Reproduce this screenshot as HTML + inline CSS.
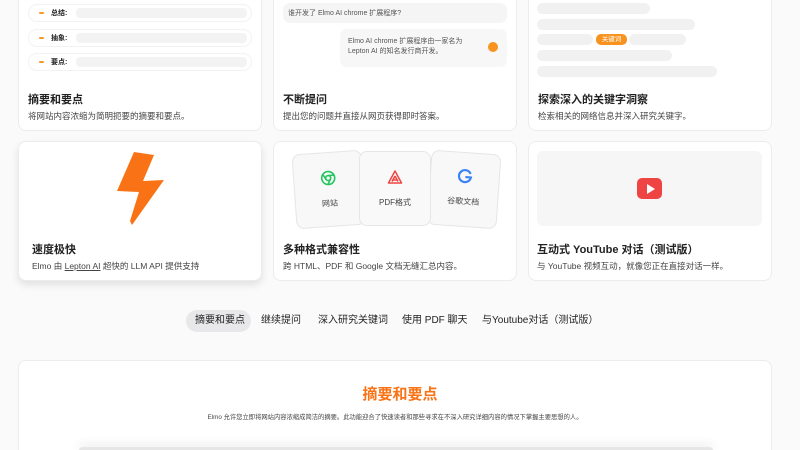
<!DOCTYPE html>
<html style="width:800px;height:450px;overflow:hidden"><head><meta charset="utf-8"><style>
*{box-sizing:border-box;margin:0;padding:0}
body{width:800px;height:450px;overflow:hidden;background:#fafafa;font-family:"Liberation Sans","Noto Sans CJK SC",sans-serif;color:#222;position:relative}
.card{position:absolute;background:#fff;border:1px solid #ececec;border-radius:8px}
.t{position:absolute;font-size:11px;font-weight:bold;color:#222}
.d{position:absolute;font-size:8.5px;color:#444}
.row{position:absolute;left:28px;width:224px;height:18px;border:1px solid #f2f2f2;border-radius:9px;background:#fff}
.row .dash{position:absolute;left:10px;top:7px;width:5px;height:2px;background:#f59a23;border-radius:1px}
.row .lb{position:absolute;left:22px;top:3px;font-size:7px;font-weight:bold}
.row .bar{position:absolute;left:47px;top:3px;right:4px;height:10px;background:#f3f3f3;border-radius:4px}
.gb{position:absolute;background:#f1f1f1;border-radius:6px;height:11px}
.tile{position:absolute;width:70px;height:75px;background:#f8f8f8;border:1px solid #e6e6e6;border-radius:8px;font-size:8px;color:#444;text-align:center}
.tab{position:absolute;top:310px;height:22px;line-height:22px;font-size:10px;color:#222}
</style></head><body>
<div class="card" style="left:18px;top:-10px;width:244px;height:141px"></div>
<div class="row" style="top:4px"><div class="dash"></div><div class="lb">总结:</div><div class="bar"></div></div>
<div class="row" style="top:29px"><div class="dash"></div><div class="lb">抽象:</div><div class="bar"></div></div>
<div class="row" style="top:53px"><div class="dash"></div><div class="lb">要点:</div><div class="bar"></div></div>
<div class="t" style="left:28px;top:91px">摘要和要点</div>
<div class="d" style="left:28px;top:110px">将网站内容浓缩为简明扼要的摘要和要点。</div>

<div class="card" style="left:273px;top:-10px;width:244px;height:141px"></div>
<div style="position:absolute;left:283px;top:3px;width:224px;height:20px;background:#f5f5f5;border-radius:7px;font-size:7px;color:#555;padding:5px 5px">谁开发了 Elmo AI chrome 扩展程序?</div>
<div style="position:absolute;left:340px;top:29px;width:167px;height:38px;background:#f7f7f7;border-radius:7px;font-size:7px;color:#555;padding:8px 8px;line-height:9.5px">Elmo AI chrome 扩展程序由一家名为<br>Lepton AI 的知名发行商开发。</div>
<div style="position:absolute;left:488px;top:42px;width:10px;height:10px;border-radius:50%;background:#f7931e"></div>
<div class="t" style="left:283px;top:91px">不断提问</div>
<div class="d" style="left:283px;top:110px">提出您的问题并直接从网页获得即时答案。</div>

<div class="card" style="left:528px;top:-10px;width:244px;height:141px"></div>
<div class="gb" style="left:537px;top:3px;width:113px"></div>
<div class="gb" style="left:537px;top:19px;width:158px"></div>
<div class="gb" style="left:537px;top:34px;width:56px"></div>
<div style="position:absolute;left:596px;top:34px;width:31px;height:11px;background:#f7931e;border-radius:5px;color:#fff;font-size:6.5px;text-align:center;line-height:11px">关键词</div>
<div class="gb" style="left:629px;top:34px;width:57px"></div>
<div class="gb" style="left:537px;top:50px;width:135px"></div>
<div class="gb" style="left:537px;top:66px;width:180px"></div>
<div class="t" style="left:538px;top:91px">探索深入的关键字洞察</div>
<div class="d" style="left:538px;top:110px">检索相关的网络信息并深入研究关键字。</div>

<div class="card" style="left:18px;top:141px;width:244px;height:140px;box-shadow:0 4px 8px rgba(0,0,0,.1)"></div>
<svg style="position:absolute;left:112px;top:150px" width="56" height="76" viewBox="0 0 56 76"><path d="M22 2 L42 5 L31 31 L52 30 L20 75 L18 71 L27 42 L5 41 Z" fill="#f97316"/></svg>
<div class="t" style="left:32px;top:241px">速度极快</div>
<div class="d" style="left:32px;top:260px">Elmo 由 <span style="text-decoration:underline">Lepton AI</span> 超快的 LLM API 提供支持</div>

<div class="card" style="left:273px;top:141px;width:244px;height:140px"></div>
<div class="tile" style="left:294px;top:152px;transform:rotate(-4deg)"><svg style="margin-top:17px" width="16" height="16" viewBox="0 0 16 16" fill="none" stroke="#22c55e" stroke-width="1.6"><circle cx="8" cy="8" r="6.5"/><circle cx="8" cy="8" r="2.5"/><path d="M8 5.5h6M5.8 9.3L2.8 4M10.2 9.3L7.2 14.5"/></svg><div style="margin-top:10px">网站</div></div>
<div class="tile" style="left:429px;top:152px;transform:rotate(4deg)"><svg style="margin-top:15px" width="16" height="16" viewBox="0 0 16 16" fill="none" stroke="#3b82f6" stroke-width="2.2"><path d="M13.5 5.5A6 6 0 1 0 14 9H8.5"/></svg><div style="margin-top:10px">谷歌文档</div></div>
<div class="tile" style="left:359px;top:151px;width:72px;background:#f9f9f9"><svg style="margin-top:17px" width="16" height="16" viewBox="0 0 16 16" fill="none" stroke="#ef4444" stroke-width="1.5" stroke-linejoin="round"><path d="M8 2L1.5 14h13Z M8 7L5 12.5M8 7l3 5.5M6 11h4"/></svg><div style="margin-top:10px">PDF格式</div></div>
<div class="t" style="left:283px;top:241px">多种格式兼容性</div>
<div class="d" style="left:283px;top:260px">跨 HTML、PDF 和 Google 文档无缝汇总内容。</div>

<div class="card" style="left:528px;top:141px;width:244px;height:140px"></div>
<div style="position:absolute;left:537px;top:151px;width:225px;height:75px;background:#f6f6f6;border-radius:6px"></div>
<div style="position:absolute;left:637px;top:178px;width:25px;height:21px;background:#ef4444;border-radius:5px"></div>
<div style="position:absolute;left:647px;top:184px;width:0;height:0;border-left:8px solid #fff;border-top:5px solid transparent;border-bottom:5px solid transparent"></div>
<div class="t" style="left:537px;top:241px">互动式 YouTube 对话（测试版）</div>
<div class="d" style="left:537px;top:260px">与 YouTube 视频互动，就像您正在直接对话一样。</div>

<div style="position:absolute;left:186px;top:310px;width:65px;height:22px;border-radius:11px;background:#e8e8ea"></div>
<div class="tab" style="left:195px">摘要和要点</div>
<div class="tab" style="left:261px">继续提问</div>
<div class="tab" style="left:318px">深入研究关键词</div>
<div class="tab" style="left:402px">使用 PDF 聊天</div>
<div class="tab" style="left:482px">与Youtube对话（测试版）</div>

<div class="card" style="left:18px;top:360px;width:754px;height:110px"></div>
<div style="position:absolute;left:0;width:800px;top:383px;text-align:center;font-size:15px;font-weight:bold;color:#f97316">摘要和要点</div>
<div style="position:absolute;left:0;width:790px;top:412px;text-align:center;font-size:6.3px;color:#444">Elmo 允许您立即将网站内容浓缩成简洁的摘要。此功能迎合了快速读者和那些寻求在不深入研究详细内容的情况下掌握主要思想的人。</div>
<div style="position:absolute;left:78px;top:447px;width:636px;height:10px;background:#e6e6e6;border-radius:6px;box-shadow:0 -4px 10px rgba(0,0,0,.06)"></div>
</body></html>
